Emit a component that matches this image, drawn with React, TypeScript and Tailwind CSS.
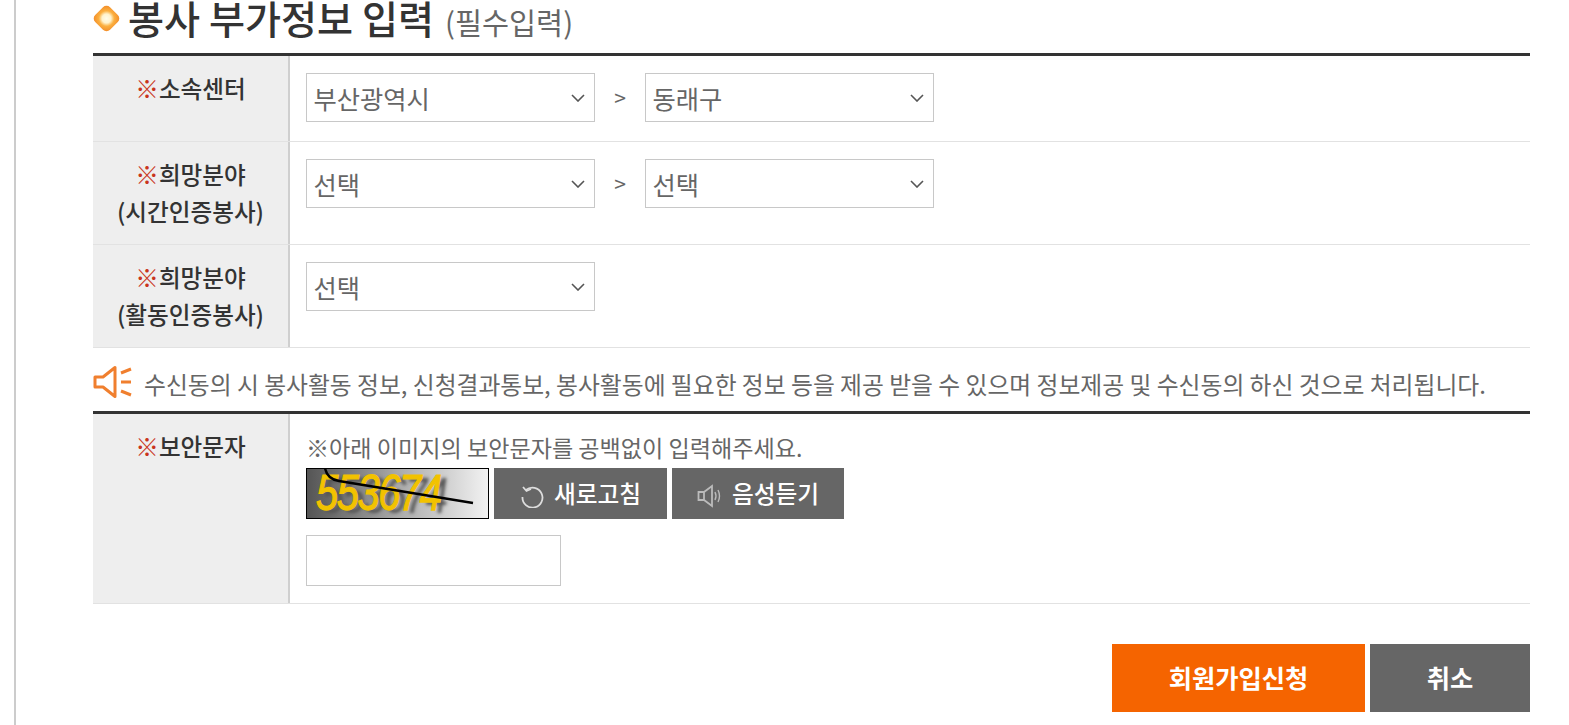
import React from "react";

const font = { fontFamily: '"Noto Sans CJK KR", "Noto Sans", sans-serif' };

const Chevron = () => (
  <svg width="14" height="8" viewBox="0 0 14 8" fill="none" className="absolute right-[9px] top-[20px]">
    <path d="M1 1 L7 7 L13 1" stroke="#555" strokeWidth="1.6" />
  </svg>
);

const Select = ({ label }: { label: string }) => (
  <div className="relative w-[289px] h-[49px] border border-[#c8c8c8] bg-white pl-[6.5px] flex items-center text-[25.3px] text-[#666] leading-none">
    <span className="mt-[2px]">{label}</span>
    <Chevron />
  </div>
);

const Mark = () => <span className="text-[#c9351c] font-normal">※</span>;

const RowHead = ({ title, sub }: { title: string; sub?: string }) => (
  <div className="w-[197px] shrink-0 bg-[#eeeeee] border-r-2 border-[#cfcfcf] text-center text-[23.6px] font-medium text-[#333] leading-[37px] pt-[14px]">
    <div>
      <Mark />
      {title}
    </div>
    {sub && <div>{sub}</div>}
  </div>
);

const Gt = () => <span className="w-[50px] h-[49px] flex items-center justify-center text-[#666] text-[21px]">&gt;</span>;

export default function App() {
  return (
    <div style={font} className="w-[1569px] h-[725px] overflow-hidden bg-white">
      <div className="ml-[14px] h-full border-l-2 border-[#cccccc] pl-[77px] pr-[39px]">
        {/* Title */}
        <div className="h-[53px] flex items-center gap-[9px] pb-[13px]">
          <div className="w-[26px] h-[26px] -mt-[3px] flex items-center justify-center shrink-0">
            <div className="w-[21px] h-[21px] rotate-45 rounded-[5px] bg-[radial-gradient(circle,#fffbe8_0%,#fff2cc_30%,#fbb040_52%,#f08020_100%)]" />
          </div>
          <div className="whitespace-nowrap leading-none text-[#333] -mt-[4px]">
            <span className="text-[39.2px] font-medium">봉사 부가정보 입력</span>
            <span className="text-[29.4px] text-[#666] ml-[11px]">(필수입력)</span>
          </div>
        </div>

        <div className="border-t-[3px] border-[#333]">
          <div className="flex h-[86px] border-b border-[#e2e2e2]">
            <RowHead title="소속센터" />
            <div className="flex items-start pl-[16px] pt-[17px]">
              <Select label="부산광역시" />
              <Gt />
              <Select label="동래구" />
            </div>
          </div>
          <div className="flex h-[103px] border-b border-[#e2e2e2]">
            <RowHead title="희망분야" sub="(시간인증봉사)" />
            <div className="flex items-start pl-[16px] pt-[17px]">
              <Select label="선택" />
              <Gt />
              <Select label="선택" />
            </div>
          </div>
          <div className="flex h-[103px] border-b border-[#e2e2e2]">
            <RowHead title="희망분야" sub="(활동인증봉사)" />
            <div className="flex items-start pl-[16px] pt-[17px]">
              <Select label="선택" />
            </div>
          </div>
        </div>

        {/* Notice */}
        <div className="h-[63px] flex items-center gap-[11px] whitespace-nowrap text-[23.8px] text-[#666] pt-[8px]">
          <svg width="40" height="34" viewBox="0 0 40 34" fill="none" className="shrink-0 -mt-[3px]">
            <path d="M2 12 H10 L22 2.5 V31.5 L10 22 H2 Z" stroke="#f07f2e" strokeWidth="3" strokeLinejoin="round" />
            <path d="M28 8 L38 4 M28 17 H38 M28 26 L38 30" stroke="#f07f2e" strokeWidth="3" />
          </svg>
          <span>수신동의 시 봉사활동 정보, 신청결과통보, 봉사활동에 필요한 정보 등을 제공 받을 수 있으며 정보제공 및 수신동의 하신 것으로 처리됩니다.</span>
        </div>

        {/* Captcha */}
        <div className="border-t-[3px] border-[#333]">
          <div className="flex h-[190px] border-b border-[#e2e2e2]">
            <RowHead title="보안문자" />
            <div className="pl-[16px] pt-[17px]">
              <div className="text-[23.1px] leading-[32px] text-[#666] whitespace-nowrap">※아래 이미지의 보안문자를 공백없이 입력해주세요.</div>
              <div className="flex gap-[5px] mt-[5px]">
                <div className="relative w-[183px] h-[51px] border border-black overflow-hidden bg-gradient-to-r from-[#555] via-[#aaa] to-[#f2f2f2]">
                  <span
                    className="absolute left-[9px] top-0 text-[40px] italic leading-[46px] tracking-[-1.5px] text-[#f2c200] scale-y-[1.25] [-webkit-text-stroke:1px_#f2c200]"
                    style={{ fontFamily: '"Liberation Sans", sans-serif', textShadow: "6px 3px 3px #555" }}
                  >
                    553674
                  </span>
                  <svg width="183" height="51" viewBox="0 0 183 51" className="absolute left-0 top-0" fill="none">
                    <path d="M18 -1 Q20 10 32 12 L166 34" stroke="#000" strokeWidth="2.5" />
                  </svg>
                </div>
                <div className="w-[173px] h-[51px] bg-[#666] flex items-center justify-center gap-[10px] text-white text-[23.7px] font-medium">
                  <svg width="24" height="24" viewBox="0 0 24 24" fill="none" className="mt-[5px]">
                    <path d="M6 6 A10 10 0 1 1 2.5 13" stroke="#ddd" strokeWidth="1.8" />
                    <path d="M3 3 L6.5 7 L11 5" stroke="#ddd" strokeWidth="1.8" />
                  </svg>
                  <span>새로고침</span>
                </div>
                <div className="w-[172px] h-[51px] bg-[#666] flex items-center justify-center gap-[8px] text-white text-[23.7px] font-medium">
                  <svg width="27" height="24" viewBox="0 0 27 24" fill="none" className="mt-[5px]">
                    <path d="M1.5 8 H7 L15 2 V22 L7 16 H1.5 Z M7 8 V16" stroke="#bbb" strokeWidth="1.8" />
                    <path d="M18 8 Q20 12 18 16 M21 6 Q24 12 21 18" stroke="#bbb" strokeWidth="1.4" />
                  </svg>
                  <span>음성듣기</span>
                </div>
              </div>
              <div className="w-[255px] h-[51px] border border-[#c8c8c8] mt-[16px]" />
            </div>
          </div>
        </div>

        {/* Buttons */}
        <div className="flex justify-end gap-[5px] mt-[40px]">
          <div className="w-[253px] h-[68px] bg-[#f56400] text-white text-[25.3px] font-bold flex items-center justify-center">회원가입신청</div>
          <div className="w-[160px] h-[68px] bg-[#666] text-white text-[25.3px] font-bold flex items-center justify-center">취소</div>
        </div>
      </div>
    </div>
  );
}
